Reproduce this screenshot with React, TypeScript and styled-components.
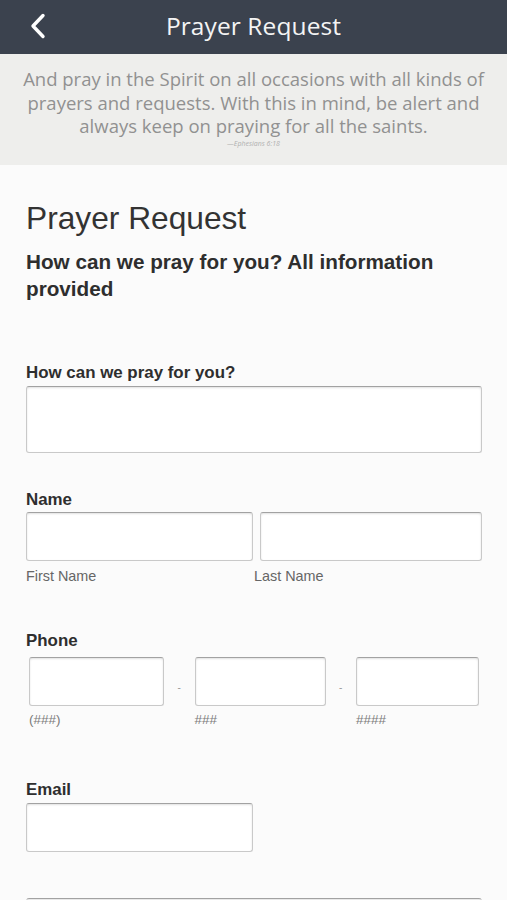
import styled, { createGlobalStyle } from "styled-components";

const GlobalStyle = createGlobalStyle`
  html, body {
    margin: 0;
    padding: 0;
    background: #fbfbfb;
  }
  * {
    box-sizing: border-box;
  }
`;

const Page = styled.div`
  width: 507px;
  height: 900px;
  overflow: hidden;
  background: #fbfbfb;
`;

const Header = styled.header`
  height: 54px;
  background: #3b424e;
  display: grid;
  grid-template-columns: 1fr auto 1fr;
  align-items: center;
`;

const BackButton = styled.button`
  justify-self: start;
  display: flex;
  align-items: center;
  background: none;
  border: 0;
  padding: 0 0 2px 30px;
  cursor: pointer;
`;

const Title = styled.h1`
  margin: 0 0 3px;
  font-family: "Open Sans", "Noto Sans", sans-serif;
  font-weight: 400;
  font-size: 24.5px;
  color: #f4f4f4;
  letter-spacing: 0.1px;
`;

const Banner = styled.section`
  height: 111px;
  background: #eeeeec;
  padding-top: 13px;
  text-align: center;
  font-family: "Open Sans", "Noto Sans", sans-serif;
`;

const Quote = styled.p`
  margin: 0;
  font-size: 18.5px;
  line-height: 23.5px;
  color: #919191;
  white-space: nowrap;
`;

const Citation = styled.div`
  margin-top: 1px;
  font-size: 7px;
  font-style: italic;
  color: #b0b0b0;
`;

const Content = styled.main`
  padding: 35px 25px 0 26px;
  font-family: "Liberation Sans", Arial, sans-serif;
  color: #333;
`;

const Heading = styled.h2`
  margin: 0;
  font-size: 31.7px;
  line-height: 36px;
  font-weight: 400;
  color: #333;
`;

const Intro = styled.p`
  margin: 12px 0 0;
  font-size: 20.7px;
  line-height: 27px;
  font-weight: 700;
  color: #2e2e2e;
`;

const Field = styled.div<{ $gap: number }>`
  margin-top: ${({ $gap }) => $gap}px;
`;

const Label = styled.label<{ $space?: number }>`
  display: block;
  font-size: 16.9px;
  line-height: 19px;
  font-weight: 700;
  color: #2e2e2e;
  margin-bottom: ${({ $space }) => $space ?? 3.5}px;
`;

const Box = styled.div<{ $width?: number; $height?: number; $offset?: number }>`
  width: ${({ $width, $offset }) =>
    $width ? `${$width}px` : `calc(100% - ${$offset ?? 0}px)`};
  height: ${({ $height }) => $height ?? 49}px;
  margin-left: ${({ $offset }) => $offset ?? 0}px;
  background: #fff;
  border: 1px solid #c9c9c9;
  border-top-color: #a2a2a2;
  border-radius: 3px;
  box-shadow: inset 0 1px 2px rgba(0, 0, 0, 0.12);
`;

const NameRow = styled.div`
  display: grid;
  grid-template-columns: 228px 1fr;
`;

const PhoneRow = styled.div`
  display: grid;
  grid-template-columns: 135px 1fr 131px 1fr 123px;
  margin-left: 3px;
  width: 450px;
`;

const Dash = styled.span`
  align-self: start;
  padding-top: 25px;
  text-align: center;
  font-size: 10px;
  line-height: 12px;
  color: #999;
`;

const Hint = styled.div<{ $small?: boolean }>`
  margin-top: ${({ $small }) => ($small ? 6 : 7)}px;
  font-size: ${({ $small }) => ($small ? 13.5 : 14.4)}px;
  line-height: 16px;
  color: ${({ $small }) => ($small ? "#7a7a7a" : "#666")};
`;

const ChevronLeft = () => (
  <svg width="16" height="26" viewBox="0 0 16 26" fill="none">
    <polyline
      points="13,2.5 3,13 13,23.5"
      stroke="#ffffff"
      strokeWidth="3.4"
      strokeLinecap="round"
      strokeLinejoin="round"
    />
  </svg>
);

export default function App() {
  return (
    <Page>
      <GlobalStyle />
      <Header>
        <BackButton aria-label="Back">
          <ChevronLeft />
        </BackButton>
        <Title>Prayer Request</Title>
        <span />
      </Header>

      <Banner>
        <Quote>
          And pray in the Spirit on all occasions with all kinds of
          <br />
          prayers and requests. With this in mind, be alert and
          <br />
          always keep on praying for all the saints.
        </Quote>
        <Citation>—Ephesians 6:18</Citation>
      </Banner>

      <Content>
        <Heading>Prayer Request</Heading>
        <Intro>How can we pray for you? All information provided</Intro>

        <Field $gap={61}>
          <Label>How can we pray for you?</Label>
          <Box $height={67} />
        </Field>

        <Field $gap={37}>
          <Label>Name</Label>
          <NameRow>
            <div>
              <Box $width={227} />
              <Hint>First Name</Hint>
            </div>
            <div>
              <Box $offset={6} />
              <Hint>Last Name</Hint>
            </div>
          </NameRow>
        </Field>

        <Field $gap={47}>
          <Label $space={7}>Phone</Label>
          <PhoneRow>
            <div>
              <Box />
              <Hint $small>(###)</Hint>
            </div>
            <Dash>-</Dash>
            <div>
              <Box />
              <Hint $small>###</Hint>
            </div>
            <Dash>-</Dash>
            <div>
              <Box />
              <Hint $small>####</Hint>
            </div>
          </PhoneRow>
        </Field>

        <Field $gap={52}>
          <Label>Email</Label>
          <Box $width={227} />
        </Field>

        <Field $gap={46}>
          <Box $height={49} />
        </Field>
      </Content>
    </Page>
  );
}
